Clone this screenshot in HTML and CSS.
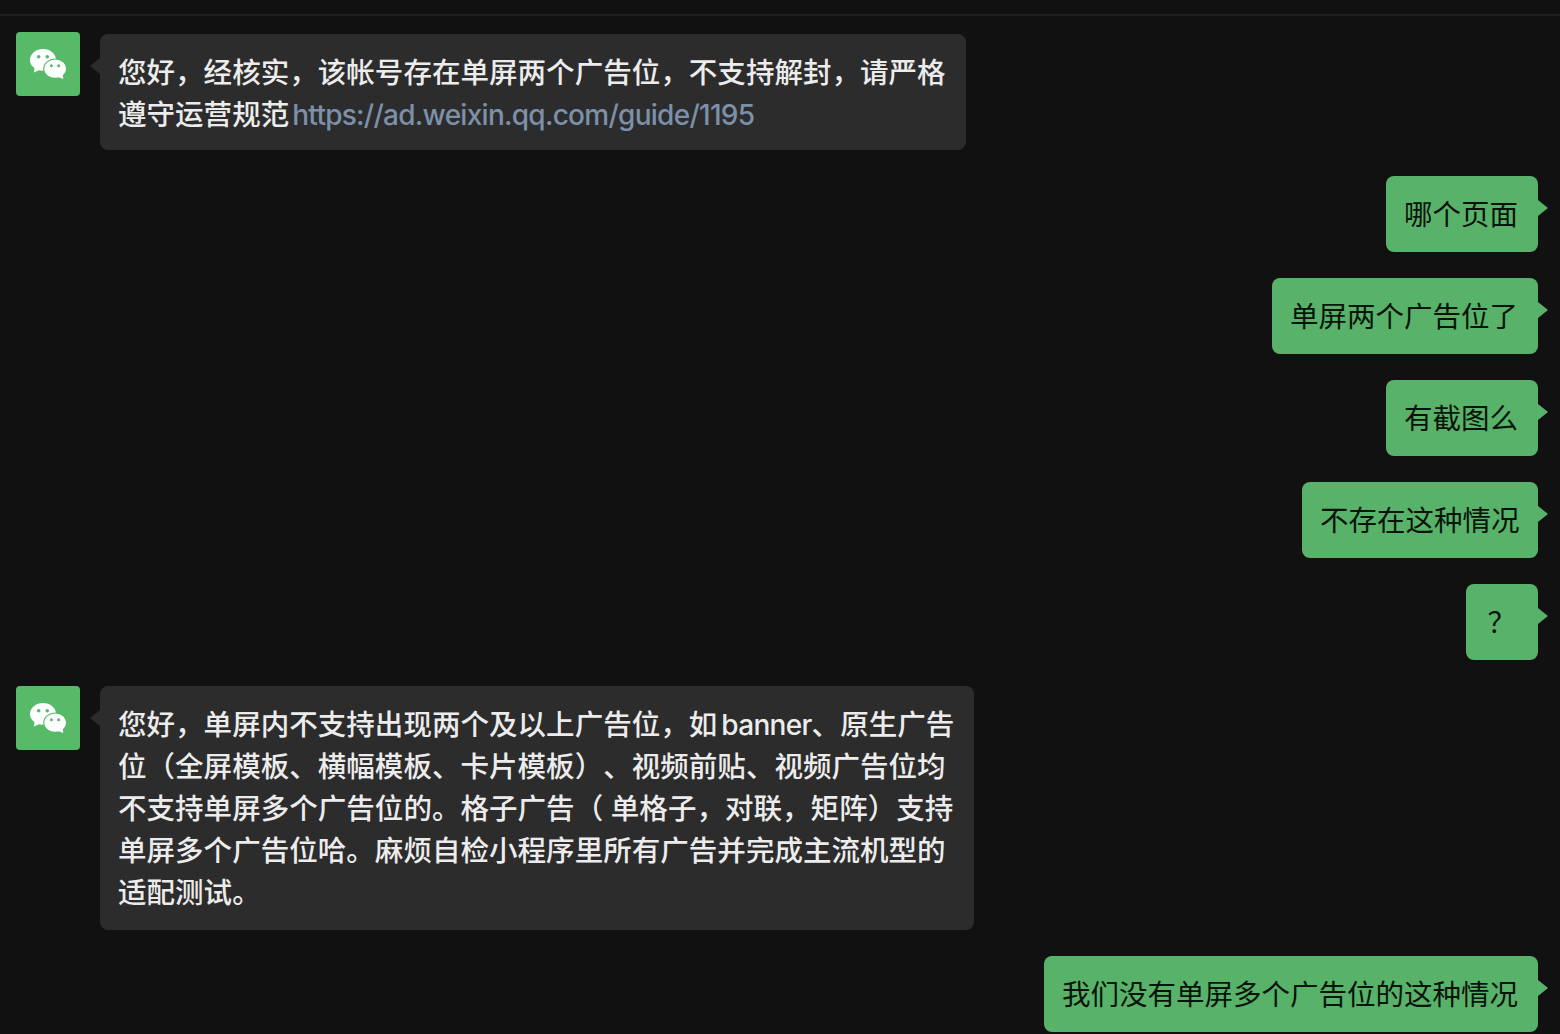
FILE: index.html
```html
<!DOCTYPE html>
<html lang="zh-CN">
<head>
    <meta charset="UTF-8">
    <meta name="viewport" content="width=device-width, initial-scale=1.0">
    <title>聊天记录</title>
    <link rel="stylesheet" href="styles.css">
</head>
<body>
    <!-- 头像图标，两条客服消息共用 -->
    <svg class="defs" width="0" height="0">
        <defs>
            <symbol id="logo" viewBox="0 0 64 64">
                <g fill="#fff">
                    <ellipse cx="27" cy="27.900" rx="13" ry="10.900"/>
                    <path d="M18.600 35.500L17.900 40.600L24 37.800Z"/>
                </g>
                <ellipse cx="39.200" cy="36.700" rx="12" ry="10.200" fill="#56ba68"/>
                <g fill="#fff">
                    <ellipse cx="39.200" cy="36.700" rx="10.900" ry="9.100"/>
                    <path d="M42 44.900L47.400 47L46.400 42Z"/>
                </g>
                <g fill="#56ba68">
                    <circle cx="22.700" cy="24.800" r="1.800"/>
                    <circle cx="31.300" cy="24.800" r="1.800"/>
                    <circle cx="35.400" cy="33.700" r="1.500"/>
                    <circle cx="42.700" cy="33.700" r="1.500"/>
                </g>
            </symbol>
        </defs>
    </svg>

    <div class="topbar"></div>

    <div class="chat">
        <div class="row received first">
            <svg class="avatar"><use href="#logo"/></svg>
            <div class="bubble">您好，经核实，该帐号存在单屏两个广告位，不支持解封，请严格<br>遵守运营规范<a class="link">https://ad.weixin.qq.com/guide/1195</a></div>
        </div>

        <div class="row sent"><div class="bubble">哪个页面</div></div>
        <div class="row sent"><div class="bubble">单屏两个广告位了</div></div>
        <div class="row sent"><div class="bubble">有截图么</div></div>
        <div class="row sent"><div class="bubble tight">不存在这种情况</div></div>
        <div class="row sent"><div class="bubble mark">？</div></div>

        <div class="row received">
            <svg class="avatar"><use href="#logo"/></svg>
            <div class="bubble">您好，单屏内不支持出现两个及以上广告位，如<span class="latin">banner</span>、原生广告<br>位（全屏模板、横幅模板、卡片模板）、视频前贴、视频广告位均<br>不支持单屏多个广告位的。格子广告（ 单格子，对联，矩阵）支持<br>单屏多个广告位哈。麻烦自检小程序里所有广告并完成主流机型的<br>适配测试。</div>
        </div>

        <div class="row sent"><div class="bubble">我们没有单屏多个广告位的这种情况</div></div>
    </div>
</body>
</html>
```
FILE: styles.css
```css
body {
    margin: 0;
    height: 1034px;
    overflow: hidden;
    background-color: #111;
    font-family: Inter, "Noto Sans CJK SC", sans-serif;
    font-size: 28.5px;
    line-height: 42px;
    text-spacing-trim: space-all;
}

.defs {
    display: block;
}

.topbar {
    height: 14px;
    border-bottom: 2px solid #1e1e1e;
}

.chat {
    display: flex;
    flex-direction: column;
    gap: 26px;
    padding: 16px 22px 0 16px;
}

.row {
    display: flex;
    align-items: flex-start;
}

.sent {
    justify-content: flex-end;
}

.avatar {
    width: 64px;
    height: 64px;
    margin-right: 20px;
    border-radius: 4px;
    background-color: #56ba68;
    flex-shrink: 0;
}

.bubble {
    position: relative;
    box-sizing: border-box;
    padding: 17.5px 20px 16.5px 18px;
    border-radius: 8px;
    white-space: nowrap;
}

.received .bubble {
    width: 874px;
    background-color: #2c2c2c;
    color: #ececec;
    letter-spacing: 0.04px;
    font-weight: 500;
}

.first .bubble {
    width: 866px;
    margin-top: 2px;
    padding-bottom: 14.5px;
}

.sent .bubble {
    min-width: 72px;
    background-color: #59b269;
    color: #07140a;
}

.sent .tight {
    width: 236px;
}

.sent .mark {
    padding-left: 21.5px;
}

/* 气泡的小三角 */
.bubble::before {
    content: "";
    position: absolute;
    top: 24px;
    width: 10px;
    height: 16px;
}

.received .bubble::before {
    left: -10px;
    background-color: #2c2c2c;
    clip-path: polygon(100% 0, 0 50%, 100% 100%);
}

.sent .bubble::before {
    right: -10px;
    background-color: #59b269;
    clip-path: polygon(0 0, 100% 50%, 0 100%);
}

.link {
    margin-left: 3px;
    color: #7d90a9;
    font-size: 28px;
    font-weight: 500;
    letter-spacing: -0.73px;
}

.latin {
    margin-left: 4px;
    font-size: 28px;
    letter-spacing: -0.7px;
}
```
